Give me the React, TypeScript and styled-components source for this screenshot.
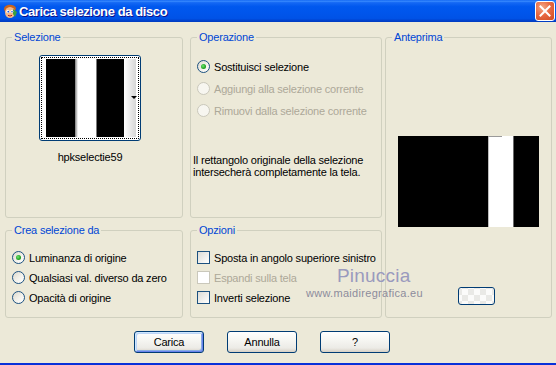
import React from "react";
import styled, { createGlobalStyle, css } from "styled-components";

const GlobalStyle = createGlobalStyle`
  html, body {
    margin: 0;
    padding: 0;
  }
  body {
    background: #ece9d8;
    font-family: "Liberation Sans", Arial, sans-serif;
    font-size: 11px;
    letter-spacing: -0.2px;
    color: #000;
  }
`;

const Window = styled.div`
  position: relative;
  width: 556px;
  height: 365px;
  display: flex;
  flex-direction: column;
  box-sizing: border-box;
  background: #ece9d8;
  border-bottom: 2px solid #0831d9;
  overflow: hidden;
`;

const TitleBar = styled.div`
  height: 22px;
  flex: none;
  display: flex;
  align-items: center;
  padding: 0 1px 0 2px;
  box-sizing: border-box;
  background: linear-gradient(
    to bottom,
    #0a5fef 0%,
    #3a8cff 5%,
    #1468f4 12%,
    #0058ee 30%,
    #0055eb 60%,
    #0052e6 84%,
    #0042ce 93%,
    #003bbf 100%
  );
`;

const TitleText = styled.span`
  margin-left: 1px;
  color: #fff;
  font-weight: bold;
  font-size: 13px;
  letter-spacing: -0.4px;
  text-shadow: 1px 1px 0 #0f1089;
`;

const CloseButton = styled.div`
  margin-left: auto;
  width: 20px;
  height: 20px;
  box-sizing: border-box;
  border: 1px solid #fff;
  border-radius: 3px;
  display: flex;
  align-items: center;
  justify-content: center;
  background: radial-gradient(circle at 35% 30%, #f4a888 0%, #e86a44 45%, #d04a22 100%);
`;

const Body = styled.div`
  flex: 1;
  display: flex;
  flex-direction: column;
  padding: 15px 0 0 5px;
`;

const Panels = styled.div`
  display: flex;
  gap: 3px;
`;

const LeftGrid = styled.div`
  display: grid;
  grid-template-columns: 178px 192px;
  grid-template-rows: 181px 88px;
  column-gap: 7px;
  row-gap: 12px;
`;

const Group = styled.div<{ $pad?: string; $width?: number; $height?: number }>`
  position: relative;
  box-sizing: border-box;
  border: 1px solid #d0d0bf;
  border-radius: 3px;
  padding: ${(p) => p.$pad || "0"};
  ${(p) => p.$width && `width: ${p.$width}px;`}
  ${(p) => p.$height && `height: ${p.$height}px;`}
`;

const Legend = styled.span`
  position: absolute;
  top: -7px;
  left: 6px;
  padding: 0 2px;
  line-height: 13px;
  background: #ece9d8;
  color: #0046d5;
`;

const ThumbColumn = styled.div`
  width: 102px;
  display: flex;
  flex-direction: column;
  align-items: center;
`;

const ThumbButton = styled.div`
  position: relative;
  width: 102px;
  height: 86px;
  box-sizing: border-box;
  border: 1px solid #003c74;
  border-radius: 3px;
  background: #fff;
  padding: 1px;
`;

const FocusRect = styled.div`
  height: 100%;
  box-sizing: border-box;
  border: 1px dotted #000;
  padding: 1px 0 0 4px;
  display: flex;
`;

const DropArrow = styled.span`
  position: absolute;
  right: 3px;
  top: 40px;
  width: 0;
  height: 0;
  border-left: 3px solid transparent;
  border-right: 3px solid transparent;
  border-top: 3px solid #000;
`;

const ThumbLabel = styled.div`
  margin-top: 10px;
  line-height: 13px;
`;

const OptionList = styled.div<{ $gap: number; $indent?: number }>`
  display: flex;
  flex-direction: column;
  gap: ${(p) => p.$gap}px;
  padding-left: ${(p) => p.$indent || 0}px;
`;

const Option = styled.div<{ $disabled?: boolean; $gap?: number }>`
  display: flex;
  align-items: center;
  height: 13px;
  gap: ${(p) => p.$gap ?? 4}px;
  color: ${(p) => (p.$disabled ? "#aca899" : "#000")};
  white-space: nowrap;
`;

const RadioCircle = styled.span<{ $checked?: boolean; $disabled?: boolean }>`
  position: relative;
  flex: none;
  width: 13px;
  height: 13px;
  box-sizing: border-box;
  border-radius: 50%;
  border: 1px solid ${(p) => (p.$disabled ? "#cac8bb" : "#1c5180")};
  background: ${(p) =>
    p.$disabled
      ? "#f7f6f0"
      : "linear-gradient(135deg, #dcd9cd 0%, #f3f2ec 55%, #ffffff 100%)"};
  ${(p) =>
    p.$checked &&
    css`
      &::after {
        content: "";
        position: absolute;
        left: 3px;
        top: 3px;
        width: 5px;
        height: 5px;
        border-radius: 50%;
        background: radial-gradient(circle at 40% 40%, #6ee672 0%, #21a121 60%, #1a8c1a 100%);
      }
    `}
`;

const CheckBox = styled.span<{ $disabled?: boolean }>`
  flex: none;
  width: 13px;
  height: 13px;
  box-sizing: border-box;
  border: 1px solid ${(p) => (p.$disabled ? "#cac8bb" : "#1c5180")};
  background: ${(p) =>
    p.$disabled ? "#ffffff" : "linear-gradient(135deg, #dcdcd7 0%, #ffffff 100%)"};
`;

const Description = styled.div`
  margin-top: 37px;
  line-height: 12px;
`;

const PreviewColumn = styled.div`
  display: flex;
  flex-direction: column;
  align-items: center;
  padding-top: 98px;
`;

const SmallButton = styled.div`
  align-self: flex-start;
  margin: 60px 0 0 72px;
  width: 37px;
  height: 18px;
  box-sizing: border-box;
  border: 1px solid #003c74;
  border-radius: 3px;
  background-color: #fbfbfa;
  background-image: conic-gradient(#e9e9e6 25%, transparent 0 50%, #e9e9e6 0 75%, transparent 0);
  background-size: 12px 12px;
  background-position: 3px 1px;
`;

const ButtonRow = styled.div`
  display: flex;
  gap: 23px;
  margin-top: 13px;
  padding-left: 129px;
`;

const PushButton = styled.button<{ $default?: boolean }>`
  width: 70px;
  height: 22px;
  box-sizing: border-box;
  padding: 0;
  border: 1px solid #003c74;
  border-radius: 3px;
  font-family: inherit;
  font-size: 11px;
  letter-spacing: inherit;
  color: #000;
  background: linear-gradient(180deg, #ffffff 0%, #f6f6f2 40%, #ecebe6 80%, #d6d0c5 100%);
  ${(p) =>
    p.$default &&
    css`
      box-shadow: inset 1px 1px 0 #cee7ff, inset -1px -1px 0 #6982ee, inset 2px 2px 0 #bcd4f6,
        inset -2px -2px 0 #89ade4;
    `}
`;

const WatermarkName = styled.span`
  position: absolute;
  left: 337px;
  top: 265px;
  font-size: 19px;
  line-height: 22px;
  letter-spacing: 0.2px;
  color: #9a9abe;
`;

const WatermarkSite = styled.span`
  position: absolute;
  left: 306px;
  top: 287px;
  font-size: 11px;
  line-height: 13px;
  letter-spacing: 0.3px;
  color: #8c8c9c;
`;

const AppIcon = () => (
  <svg width="16" height="16" viewBox="0 0 16 16">
    <path d="M2 6 C2 1 12 0 14 5 L13 8 L3 9 Z" fill="#c8641e" />
    <ellipse cx="8" cy="9.5" rx="5" ry="5.5" fill="#f4b888" />
    <path d="M11 6 L15 9 L13 14 L11 11 Z" fill="#3aa040" />
    <circle cx="6" cy="8.5" r="1.7" fill="#fff" />
    <circle cx="6.3" cy="8.7" r="0.9" fill="#1e4fcf" />
    <circle cx="9.8" cy="8.5" r="1.5" fill="#fff" />
    <circle cx="10" cy="8.7" r="0.8" fill="#1e4fcf" />
    <path d="M6 12.3 Q8 13.8 10 12.3" stroke="#b02020" strokeWidth="1" fill="none" />
  </svg>
);

const CloseIcon = () => (
  <svg width="12" height="12" viewBox="0 0 12 12">
    <path d="M1.5 1.5 L10.5 10.5 M10.5 1.5 L1.5 10.5" stroke="#fff" strokeWidth="2" strokeLinecap="square" />
  </svg>
);

const SelectionThumb = () => (
  <svg width="90" height="78" viewBox="0 0 90 78">
    <defs>
      <linearGradient id="edge" x1="0" x2="1">
        <stop offset="0" stopColor="#7a7a7a" />
        <stop offset="1" stopColor="#ffffff" />
      </linearGradient>
      <linearGradient id="fade" x1="0" x2="1">
        <stop offset="0" stopColor="#ffffff" />
        <stop offset="1" stopColor="#d6d6d6" />
      </linearGradient>
    </defs>
    <rect x="0" y="0" width="29" height="78" fill="#000" />
    <rect x="29" y="0" width="21" height="78" fill="#fff" />
    <rect x="29" y="0" width="3" height="78" fill="url(#edge)" />
    <rect x="50" y="0" width="1" height="78" fill="#7a7a7a" />
    <rect x="51" y="0" width="27" height="78" fill="#000" />
    <rect x="78" y="0" width="12" height="78" fill="url(#fade)" />
  </svg>
);

const PreviewImage = () => (
  <svg width="141" height="91" viewBox="0 0 141 91">
    <rect x="0" y="0" width="141" height="91" fill="#000" />
    <rect x="90" y="0" width="26" height="91" fill="#fff" />
    <rect x="90" y="0" width="1" height="91" fill="#bdbdbd" />
    <rect x="90" y="0" width="14" height="1" fill="#9a9a9a" />
    <rect x="115" y="0" width="1" height="91" fill="#6a6a6a" />
  </svg>
);

const Radio: React.FC<{ label: string; checked?: boolean; disabled?: boolean }> = ({
  label,
  checked,
  disabled,
}) => (
  <Option $disabled={disabled}>
    <RadioCircle $checked={checked} $disabled={disabled} />
    <span>{label}</span>
  </Option>
);

const Check: React.FC<{ label: string; disabled?: boolean }> = ({ label, disabled }) => (
  <Option $disabled={disabled} $gap={4}>
    <CheckBox $disabled={disabled} />
    <span>{label}</span>
  </Option>
);

const App: React.FC = () => {
  return (
    <>
      <GlobalStyle />
      <Window>
        <TitleBar>
          <AppIcon />
          <TitleText>Carica selezione da disco</TitleText>
          <CloseButton>
            <CloseIcon />
          </CloseButton>
        </TitleBar>
        <Body>
          <Panels>
            <LeftGrid>
              <Group $pad="17px 0 0 33px">
                <Legend>Selezione</Legend>
                <ThumbColumn>
                  <ThumbButton>
                    <FocusRect>
                      <SelectionThumb />
                    </FocusRect>
                    <DropArrow />
                  </ThumbButton>
                  <ThumbLabel>hpkselectie59</ThumbLabel>
                </ThumbColumn>
              </Group>
              <Group $pad="22px 0 0 2px">
                <Legend>Operazione</Legend>
                <OptionList $gap={9} $indent={4}>
                  <Radio label="Sostituisci selezione" checked />
                  <Radio label="Aggiungi alla selezione corrente" disabled />
                  <Radio label="Rimuovi dalla selezione corrente" disabled />
                </OptionList>
                <Description>
                  Il rettangolo originale della selezione
                  <br />
                  intersecherà completamente la tela.
                </Description>
              </Group>
              <Group $pad="20px 0 0 6px">
                <Legend>Crea selezione da</Legend>
                <OptionList $gap={7}>
                  <Radio label="Luminanza di origine" checked />
                  <Radio label="Qualsiasi val. diverso da zero" />
                  <Radio label="Opacità di origine" />
                </OptionList>
              </Group>
              <Group $pad="20px 0 0 6px">
                <Legend>Opzioni</Legend>
                <OptionList $gap={7}>
                  <Check label="Sposta in angolo superiore sinistro" />
                  <Check label="Espandi sulla tela" disabled />
                  <Check label="Inverti selezione" />
                </OptionList>
              </Group>
            </LeftGrid>
            <Group $width={167} $height={281}>
              <Legend>Anteprima</Legend>
              <PreviewColumn>
                <PreviewImage />
                <SmallButton />
              </PreviewColumn>
            </Group>
          </Panels>
          <ButtonRow>
            <PushButton $default>Carica</PushButton>
            <PushButton>Annulla</PushButton>
            <PushButton>?</PushButton>
          </ButtonRow>
        </Body>
        <WatermarkName>Pinuccia</WatermarkName>
        <WatermarkSite>www.maidiregrafica.eu</WatermarkSite>
      </Window>
    </>
  );
};

export default App;
